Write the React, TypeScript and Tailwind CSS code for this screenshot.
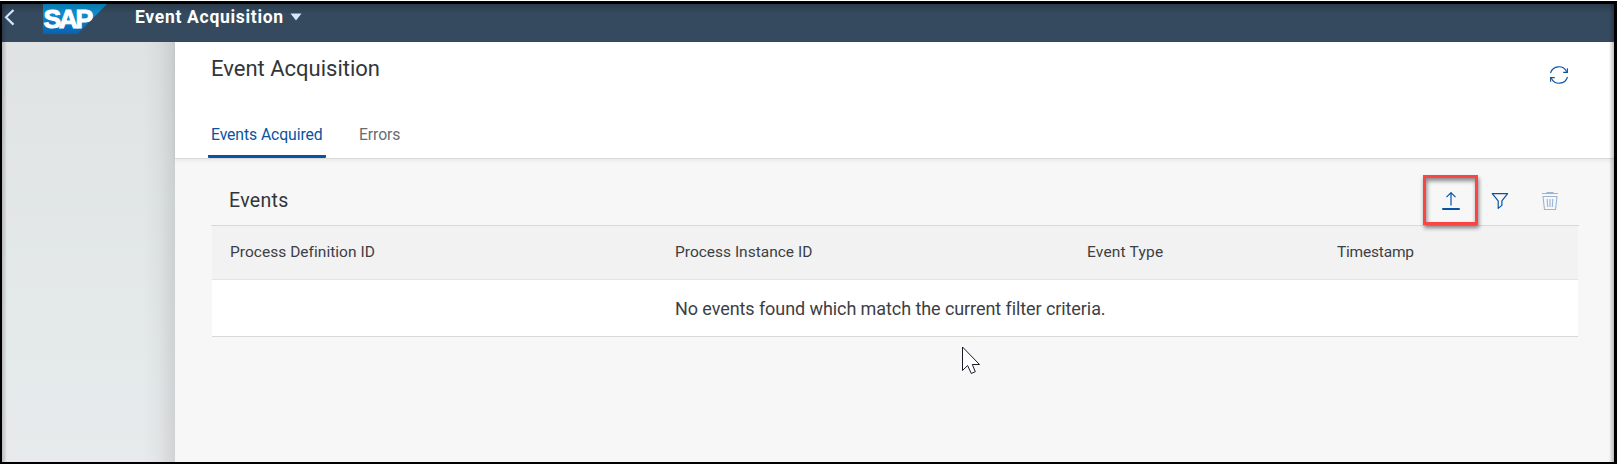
import React from "react";

const columns = [
  { label: "Process Definition ID", cls: "w-[463px] pl-[18px] tracking-[0.03px]" },
  { label: "Process Instance ID", cls: "w-[412px]" },
  { label: "Event Type", cls: "w-[250px] tracking-[0.2px]" },
  { label: "Timestamp", cls: "flex-1 tracking-[-0.2px]" },
];

function SapLogo() {
  return (
    <svg width="64" height="30" viewBox="0 0 64 30" className="block shrink-0" aria-label="SAP">
      <defs>
        <linearGradient id="sap" x1="0" y1="0" x2="0" y2="1">
          <stop offset="0" stopColor="#0a78a8" />
          <stop offset="0.3" stopColor="#0c8dd0" />
          <stop offset="1" stopColor="#0862b4" />
        </linearGradient>
      </defs>
      <path d="M0 0H64L34.500 30H0Z" fill="url(#sap)" />
      <text x="0.600" y="23.500" fill="#fff" stroke="#fff" strokeWidth="1" fontFamily="Liberation Sans, sans-serif" fontWeight="700" fontSize="26.500" letterSpacing="-2.500">SAP</text>
    </svg>
  );
}

function RefreshIcon() {
  return (
    <svg width="20" height="20" viewBox="0 0 20 20" fill="none" stroke="#0854a0" strokeWidth="1.100" className="block">
      <path d="M1.500 8A8.700 8.700 0 0 1 17.700 6.800M18.500 12A8.700 8.700 0 0 1 2.300 13.200" />
      <path d="M18.400 3.200V7.400H14.200M1.600 16.800V12.600H5.800" />
    </svg>
  );
}

function UploadIcon() {
  return (
    <svg width="18" height="18" viewBox="0 0 18 18" fill="none" className="block">
      <path d="M9 13.500V0.800M4.500 5.200L9 0.700L13.500 5.200" stroke="#0854a0" strokeWidth="1.200" />
      <path d="M1 17H17" stroke="#0854a0" strokeWidth="2" strokeLinecap="round" />
    </svg>
  );
}

function FilterIcon() {
  return (
    <svg width="18" height="18" viewBox="0 0 18 18" fill="none" stroke="#0854a0" strokeWidth="1.200" strokeLinejoin="round" className="block">
      <path d="M1.200 1.600H16.600L10.900 8.800V13.400L7.200 16.400V8.800Z" />
    </svg>
  );
}

function TrashIcon() {
  return (
    <svg width="18" height="18" viewBox="0 0 18 18" fill="none" stroke="#0854a0" strokeOpacity="0.4" strokeWidth="1.100" className="block">
      <path d="M1 1.500H17M6 1V0.500H12V1M2 4.500H16L14.500 17.500H3.500Z" />
      <path d="M6.200 7L6.700 15M9 7V15M11.800 7L11.300 15" />
    </svg>
  );
}

export default function App() {
  return (
    <div className="relative h-[464px] w-[1617px] overflow-hidden bg-white pt-px font-['Roboto','Open_Sans',sans-serif] text-[#32363a]">
      <div className="flex h-[463px] flex-col border-b-2 border-l-2 border-r-3 border-t-3 border-black">
        <header className="flex h-[38px] shrink-0 items-start bg-linear-to-b from-[#2a3b4a] via-[#354a5f] via-25% to-[#354a5f]">
          <svg width="41" height="30" viewBox="0 0 41 30" fill="none" className="shrink-0">
            <path d="M11.500 6L4 13.300L11.500 20.600" stroke="#d1e8ff" strokeWidth="2.200" />
          </svg>
          <SapLogo />
          <div className="ml-[28px] flex h-[26px] items-center">
            <span className="whitespace-nowrap text-[17.500px] font-bold tracking-[0.7px] text-white">Event Acquisition</span>
            <svg width="12" height="8" viewBox="0 0 12 8" className="ml-[6px]">
              <path d="M0.500 0.500H11.500L6 7.500Z" fill="#d1e8ff" />
            </svg>
          </div>
        </header>

        <div className="flex min-h-0 flex-1">
          <aside className="flex w-[173px] shrink-0 bg-linear-to-b from-[#dfe3e4] via-[#e5eaeb] via-80% to-[#e8eaec]">
            <div className="ml-auto w-[32px] bg-linear-to-r from-black/0 via-black/3 to-black/10" />
          </aside>

          <main className="flex flex-1 flex-col bg-[#f7f7f7]">
            <section className="flex h-[117px] shrink-0 flex-col justify-between border-b border-[#d9d9d9] bg-white pl-[33px] pr-[45px] shadow-[0_2px_4px_rgba(0,0,0,0.06)]">
              <div className="flex justify-between pl-[3px]">
                <h1 className="mt-[11px] text-[22px] leading-[32px]">Event Acquisition</h1>
                <div className="mt-[23px]"><RefreshIcon /></div>
              </div>
              <nav className="flex text-[15.750px] leading-[19px] tracking-[-0.09px]">
                <div className="h-[33px] w-[118px] whitespace-nowrap rounded-b-[1px] border-b-3 border-[#0854a0] pl-[3px] text-[#0854a0]">Events Acquired</div>
                <div className="ml-[33px] text-[#6a6d70]">Errors</div>
              </nav>
            </section>

            <section className="pl-[36px] pr-[35px]">
              <div className="flex h-[67px] items-center justify-between border-b border-[#d9d9d9] pl-[18px]">
                <h2 className="mt-[17px] text-[19.500px] leading-[26px] tracking-[0.3px]">Events</h2>
                <div className="flex items-center pr-[20px] pt-[17px]">
                  <div className="-mt-[1px] mr-[13px] flex h-[50px] w-[55px] items-center justify-center border-3 border-[#fc4444] pt-px shadow-[1px_3px_4px_rgba(0,0,0,0.45),inset_1px_3px_4px_rgba(0,0,0,0.45)]">
                    <UploadIcon />
                  </div>
                  <FilterIcon />
                  <div className="ml-[32px]"><TrashIcon /></div>
                </div>
              </div>
              <div className="mx-px flex h-[54px] items-center border-b border-[#e4e4e4] bg-[#f2f2f2] pb-[2px] text-[15.500px] leading-[20px] text-[#3c4044]">
                {columns.map((c) => (
                  <div key={c.label} className={c.cls}>{c.label}</div>
                ))}
              </div>
              <div className="mx-px flex h-[57px] items-center whitespace-nowrap border-b border-[#d9d9d9] bg-white pl-[463px] pt-px text-[18px] tracking-[-0.08px] text-[#3c4044]">
                No events found which match the current filter criteria.
              </div>
            </section>
          </main>
        </div>
      </div>
      <div className="pointer-events-none absolute bottom-[2px] right-[3px] top-[4px] w-[5px] bg-linear-to-r from-black/0 to-black/25" />
      <div className="pointer-events-none absolute bottom-[2px] left-[2px] top-[4px] w-[5px] bg-linear-to-l from-black/0 to-black/20" />
      <svg width="20" height="30" viewBox="0 0 20 30" className="pointer-events-none absolute left-[962px] top-[346px]">
        <path d="M0.500 1V24.500L5.600 19.500L9.300 27.500L13.300 25.700L10.300 18.500H17.500Z" fill="#fff" stroke="#1a1a2a" strokeWidth="1" />
      </svg>
    </div>
  );
}
